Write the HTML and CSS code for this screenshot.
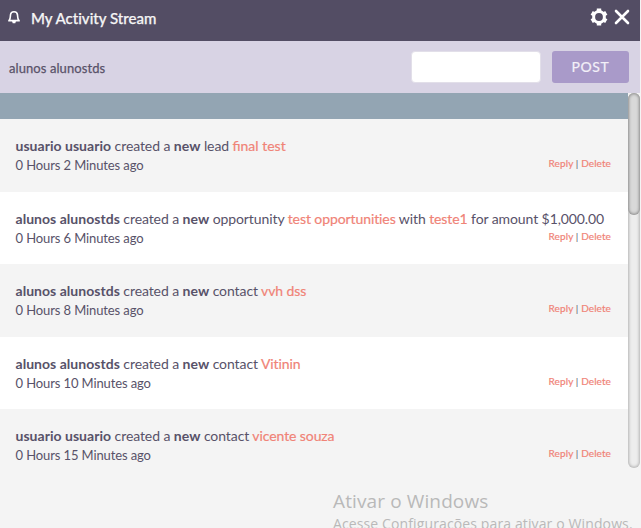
FILE: index.html
```html
<!DOCTYPE html>
<html lang="en">
<head>
<meta charset="utf-8">
<title>My Activity Stream</title>
<link rel="stylesheet" href="styles.css">
</head>
<body>
<section class="dashlet">
  <header class="head">
    <svg class="bell" width="14" height="15" viewBox="0 0 14 15"><path d="M1.2 10.6H12.8M2.3 10.4C3.4 8.8 3.3 7 3.5 4.8C3.7 2.7 4.8 1.7 7 1.7S10.3 2.7 10.5 4.8C10.7 7 10.6 8.8 11.7 10.4" fill="none" stroke="#fff" stroke-width="1.6"/><path d="M5 11H9L8.3 13.3H5.7Z" fill="#fff"/></svg>
    <h1>My Activity Stream</h1>
    <svg class="gear" width="18" height="18" viewBox="0 0 18 18"><circle cx="9" cy="9" r="5.4" fill="none" stroke="#fff" stroke-width="3"/><path d="M9 .6V3.6M9 14.4V17.4M1.7 4.8L4.3 6.3M13.7 11.7L16.3 13.2M1.7 13.2L4.3 11.7M13.7 6.3L16.3 4.8" stroke="#fff" stroke-width="4.4"/></svg>
    <svg class="close" width="16" height="16" viewBox="0 0 16 16"><path d="M2 2L14 14M14 2L2 14" stroke="#fff" stroke-width="2.6" stroke-linecap="round"/></svg>
  </header>
  <form class="post">
    <label for="msg">alunos alunostds</label>
    <input id="msg" type="text">
    <button type="button">POST</button>
  </form>
  <div class="stream">
    <div class="list">
      <div class="band"></div>
      <article><p><b>usuario usuario</b> created a <b>new</b> lead <a class="lig">final test</a></p><div class="meta"><time>0 Hours 2 Minutes ago</time><span class="actions"><a>Reply</a> | <a>Delete</a></span></div></article>
      <article><p><b>alunos alunostds</b> created a <b>new</b> opportunity <a>test opportunities</a> with <a>teste1</a> for amount $1,000.00</p><div class="meta"><time>0 Hours 6 Minutes ago</time><span class="actions"><a>Reply</a> | <a>Delete</a></span></div></article>
      <article><p><b>alunos alunostds</b> created a <b>new</b> contact <a>vvh dss</a></p><div class="meta"><time>0 Hours 8 Minutes ago</time><span class="actions"><a>Reply</a> | <a>Delete</a></span></div></article>
      <article><p><b>alunos alunostds</b> created a <b>new</b> contact <a>Vitinin</a></p><div class="meta"><time>0 Hours 10 Minutes ago</time><span class="actions"><a>Reply</a> | <a>Delete</a></span></div></article>
      <article><p><b>usuario usuario</b> created a <b>new</b> contact <a>vicente souza</a></p><div class="meta"><time>0 Hours 15 Minutes ago</time><span class="actions"><a>Reply</a> | <a>Delete</a></span></div></article>
    </div>
    <div class="track"><div class="thumb"></div></div>
  </div>
</section>
<aside class="watermark"><strong>Ativar o Windows</strong><span>Acesse Configurações para ativar o Windows.</span></aside>
</body>
</html>
```
FILE: styles.css
```css
* { box-sizing: border-box; }
body {
  margin: 0;
  height: 528px;
  overflow: hidden;
  background: #f4f4f4;
  color: #585269;
  font-family: Lato, "Liberation Sans", sans-serif;
}
.dashlet { width: 640px; }
.head {
  display: flex;
  height: 41px;
  padding: 0 10px 0 7px;
  background: #534d64;
  color: #f5f5f5;
}
.head h1 {
  flex: 1;
  margin: 8px 0 0 10px;
  font-size: 15px;
  line-height: 20px;
  font-weight: 500;
  letter-spacing: .01px;
  -webkit-text-stroke: .25px;
}
.bell { margin-top: 10px; }
.gear { margin: 8px 6px 0 0; }
.close { margin-top: 9px; }
.post {
  display: flex;
  align-items: center;
  height: 52px;
  padding: 0 11px 0 9px;
  background: #d8d3e4;
}
.post label {
  flex: 1;
  padding-top: 2px;
  font-size: 13px;
  letter-spacing: .08px;
  -webkit-text-stroke: .25px;
}
.post input {
  width: 130px;
  height: 32px;
  margin-right: 11px;
  border: 1px solid #e2dfe9;
  border-radius: 4px;
  background: #fff;
}
.post button {
  width: 77px;
  height: 32px;
  padding: 0;
  border: 0;
  border-radius: 3px;
  background: #a99ac9;
  color: #f3f0f8;
  font: 14px/32px Lato, sans-serif;
  letter-spacing: .6px;
  -webkit-text-stroke: .2px;
}
.stream { display: flex; height: 375px; }
.list { width: 628px; }
.band { height: 26px; background: #93a5b3; }
article {
  height: 72.5px;
  padding: 17px 17px 0 15.5px;
  background: #fff;
}
article:nth-child(even) { background: #f4f4f4; }
article p {
  margin: 0;
  font-size: 14px;
  line-height: 20px;
  letter-spacing: -.09px;
  white-space: nowrap;
}
b { letter-spacing: .03px; }
a { color: #f08377; -webkit-text-stroke: .2px; }
.lig { letter-spacing: 0; }
.meta { display: flex; justify-content: space-between; }
time { font-size: 13px; line-height: 18px; letter-spacing: -.11px; }
.actions { font-size: 10px; line-height: 15px; letter-spacing: .1px; }
.track {
  width: 12px;
  height: 375px;
  border-radius: 6px;
  background: #ededed;
  box-shadow: inset 0 0 3px 1px #b4b4b4;
}
.thumb {
  height: 122px;
  border-radius: 6px;
  background: #d9d9d9;
  box-shadow: inset 0 0 3px 1px #8c8c8c;
}
.watermark {
  display: flex;
  flex-direction: column;
  margin: 20px 0 0 333px;
  color: #b9b9b9;
  font-family: "Open Sans", "Noto Sans", sans-serif;
  white-space: nowrap;
}
.watermark strong { font-size: 19px; line-height: 26px; font-weight: 400; letter-spacing: .12px; }
.watermark span { font-size: 14px; line-height: 20px; letter-spacing: .12px; }
```
